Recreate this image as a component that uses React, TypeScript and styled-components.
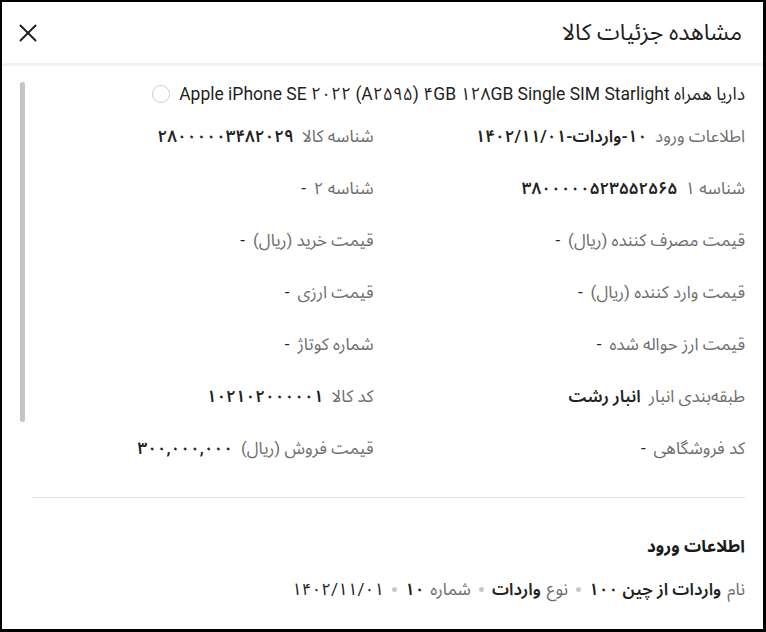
import styled, { createGlobalStyle } from 'styled-components';
import { X } from 'lucide-react';

const GlobalStyle = createGlobalStyle`
  html, body {
    margin: 0;
    padding: 0;
    background: #fff;
  }
  body {
    font-family: Roboto, "Noto Sans Arabic", Vazirmatn, "DejaVu Sans", sans-serif;
    color: #212121;
  }
`;

const Frame = styled.div`
  box-sizing: border-box;
  width: 766px;
  height: 632px;
  border: 2px solid #000;
  border-right-width: 3px;
  border-bottom-width: 3px;
  direction: rtl;
  display: flex;
  flex-direction: column;
  overflow: hidden;
  background: #fff;
`;

const Header = styled.header`
  height: 61px;
  flex-shrink: 0;
  display: flex;
  align-items: center;
  justify-content: space-between;
  padding: 0 21px 0 11px;
  border-bottom: 3px solid #f2f2f2;
`;

const Title = styled.h1`
  margin: 0;
  font-size: 23px;
  font-weight: 400;
  color: #1f1f1f;
`;

const CloseButton = styled.button`
  border: 0;
  background: none;
  padding: 0;
  display: flex;
  color: #222;
  cursor: pointer;
`;

const Body = styled.div`
  position: relative;
  flex: 1;
  padding: 16px 18px 0 30px;
`;

// scroll thumb sits over the left edge of the body
const ScrollThumb = styled.div`
  position: absolute;
  left: 18px;
  top: 16px;
  width: 5px;
  height: 340px;
  border-radius: 3px;
  background: #c4c4c4;
`;

const ProductRow = styled.div`
  display: flex;
  align-items: center;
  gap: 9px;
  font-size: 17.5px;
  line-height: 24px;
  color: #1f1f1f;
`;

const Radio = styled.span`
  box-sizing: border-box;
  width: 18px;
  height: 18px;
  border-radius: 50%;
  border: 1px solid #cfcfcf;
  background: #fff;
`;

const FieldGrid = styled.div`
  display: grid;
  grid-template-columns: 1fr 1fr;
  column-gap: 30px;
  row-gap: 28px;
  margin-top: 18px;
`;

const Field = styled.div`
  display: flex;
  align-items: baseline;
  gap: 8px;
  font-size: 17px;
  line-height: 24px;
`;

const Label = styled.span`
  color: #6e6e6e;
`;

const Value = styled.span<{ $strong?: boolean }>`
  color: #222;
  font-weight: ${(p) => (p.$strong ? 600 : 400)};
`;

const Divider = styled.hr`
  border: 0;
  border-top: 1px solid #e0e0e0;
  margin: 37px 0 0;
`;

const SectionTitle = styled.h2`
  margin: 36px 0 0;
  font-size: 17px;
  line-height: 24px;
  font-weight: 700;
  color: #1a1a1a;
`;

const InfoLine = styled.div`
  margin-top: 19px;
  display: flex;
  align-items: center;
  flex-wrap: wrap;
  font-size: 17px;
  line-height: 24px;
  gap: 6px;
`;

const Dot = styled.span`
  width: 5px;
  height: 5px;
  border-radius: 50%;
  background: #c8c8c8;
  margin: 0 2px;
`;

type FieldItem = { label: string; value: string; strong?: boolean };

const fields: FieldItem[] = [
  { label: 'اطلاعات ورود', value: '۱۰-واردات-۱۴۰۲/۱۱/۰۱', strong: true },
  { label: 'شناسه کالا', value: '۲۸۰۰۰۰۰۳۴۸۲۰۲۹', strong: true },
  { label: 'شناسه ۱', value: '۳۸۰۰۰۰۰۵۲۳۵۵۲۵۶۵', strong: true },
  { label: 'شناسه ۲', value: '-' },
  { label: 'قیمت مصرف کننده (ریال)', value: '-' },
  { label: 'قیمت خرید (ریال)', value: '-' },
  { label: 'قیمت وارد کننده (ریال)', value: '-' },
  { label: 'قیمت ارزی', value: '-' },
  { label: 'قیمت ارز حواله شده', value: '-' },
  { label: 'شماره کوتاژ', value: '-' },
  { label: 'طبقه‌بندی انبار', value: 'انبار رشت', strong: true },
  { label: 'کد کالا', value: '۱۰۲۱۰۲۰۰۰۰۰۱', strong: true },
  { label: 'کد فروشگاهی', value: '-' },
  { label: 'قیمت فروش (ریال)', value: '۳۰۰,۰۰۰,۰۰۰', strong: true },
];

export default function App() {
  return (
    <>
      <GlobalStyle />
      <Frame>
        <Header>
          <Title>مشاهده جزئیات کالا</Title>
          <CloseButton aria-label="بستن">
            <X size={30} strokeWidth={1.6} />
          </CloseButton>
        </Header>
        <Body>
          <ScrollThumb />
          <ProductRow>
            <span>داریا همراه Apple iPhone SE ۲۰۲۲ (A۲۵۹۵) ۴GB ۱۲۸GB Single SIM Starlight</span>
            <Radio />
          </ProductRow>
          <FieldGrid>
            {fields.map((f) => (
              <Field key={f.label}>
                <Label>{f.label}</Label>
                <Value $strong={f.strong}>{f.value}</Value>
              </Field>
            ))}
          </FieldGrid>
          <Divider />
          <SectionTitle>اطلاعات ورود</SectionTitle>
          <InfoLine>
            <Label>نام</Label>
            <Value $strong>واردات از چین ۱۰۰</Value>
            <Dot />
            <Label>نوع</Label>
            <Value $strong>واردات</Value>
            <Dot />
            <Label>شماره</Label>
            <Value $strong>۱۰</Value>
            <Dot />
            <Value>۱۴۰۲/۱۱/۰۱</Value>
          </InfoLine>
        </Body>
      </Frame>
    </>
  );
}
